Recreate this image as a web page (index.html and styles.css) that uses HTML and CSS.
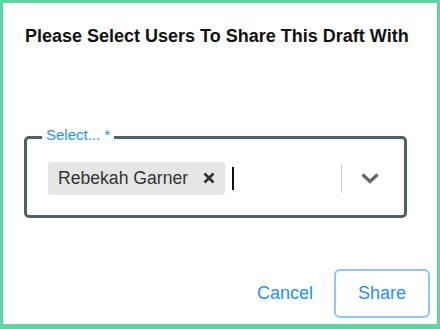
FILE: index.html
```html
<!DOCTYPE html>
<html>
<head>
<meta charset="utf-8">
<link rel="stylesheet" href="styles.css">
</head>
<body>
<div class="dialog">
  <h1 class="title">Please Select Users To Share This Draft With</h1>
  <div class="field">
    <span class="label">Select... *</span>
    <div class="values">
      <span class="chip">
        <span class="chip-text">Rebekah Garner</span>
        <svg class="chip-x" width="12" height="12" viewBox="0 0 12 12"><path d="M1.5 1.5L10.5 10.5M10.5 1.5L1.5 10.5" stroke="#333" stroke-width="2.6" stroke-linecap="butt"/></svg>
      </span>
      <span class="cursor"></span>
    </div>
    <span class="sep"></span>
    <svg class="chev" width="20" height="12" viewBox="0 0 20 12"><path d="M2.5 2.5L10 9.5L17.5 2.5" fill="none" stroke="#666" stroke-width="3.2"/></svg>
  </div>
  <div class="actions">
    <button class="btn cancel">Cancel</button>
    <button class="btn share">Share</button>
  </div>
</div>
</body>
</html>
```
FILE: styles.css
```css
html, body { margin: 0; padding: 0; }
body { font-family: "Liberation Sans", Arial, sans-serif; background: #fff; }
.dialog {
  box-sizing: border-box;
  width: 440px;
  height: 329px;
  border: 3px solid #5fd4a0;
  border-bottom-width: 5px;
  padding: 0 7px 0 21px;
  display: flex;
  flex-direction: column;
}
.title {
  margin: 23px 0 0 1px;
  font-size: 18px;
  font-weight: bold;
  line-height: 20px;
  color: #111;
}
.field {
  position: relative;
  margin-top: 90px;
  margin-right: 23px;
  height: 82px;
  flex: none;
  box-sizing: border-box;
  border: 3px solid #4a626b;
  border-radius: 5px;
  display: flex;
  align-items: center;
  padding: 0 21px 0 21px;
}
.label {
  position: absolute;
  left: 15px;
  top: -13px;
  background: #fff;
  padding: 0 4px;
  font-size: 15px;
  line-height: 18px;
  color: #1e8fff;
}
.values {
  flex: 1;
  display: flex;
  align-items: center;
  margin-top: 2px;
}
.chip {
  display: inline-flex;
  align-items: center;
  height: 33px;
  background: #e6e6e6;
  border-radius: 3px;
  padding: 0 10px 0 10px;
}
.chip-text {
  font-size: 17.6px;
  color: #333;
}
.chip-x { margin-left: 15px; }
.cursor {
  width: 2px;
  height: 23px;
  background: #111;
  margin-left: 7px;
}
.sep {
  width: 1px;
  height: 29px;
  background: #ccc;
  margin-right: 18px;
  margin-top: 2px;
}
.chev { margin-top: 2px; margin-right: 3px; }
.actions {
  display: flex;
  justify-content: flex-end;
  align-items: center;
  margin-top: 51px;
}
.btn {
  font-family: "Liberation Sans", Arial, sans-serif;
  font-size: 18px;
  color: #1e8fff;
  background: #fff;
  cursor: pointer;
}
.cancel {
  border: none;
  padding: 0;
  margin-right: 21px;
}
.share {
  width: 96px;
  height: 49px;
  border: 2px solid #8ec5ff;
  border-radius: 6px;
  padding: 0;
}
```
